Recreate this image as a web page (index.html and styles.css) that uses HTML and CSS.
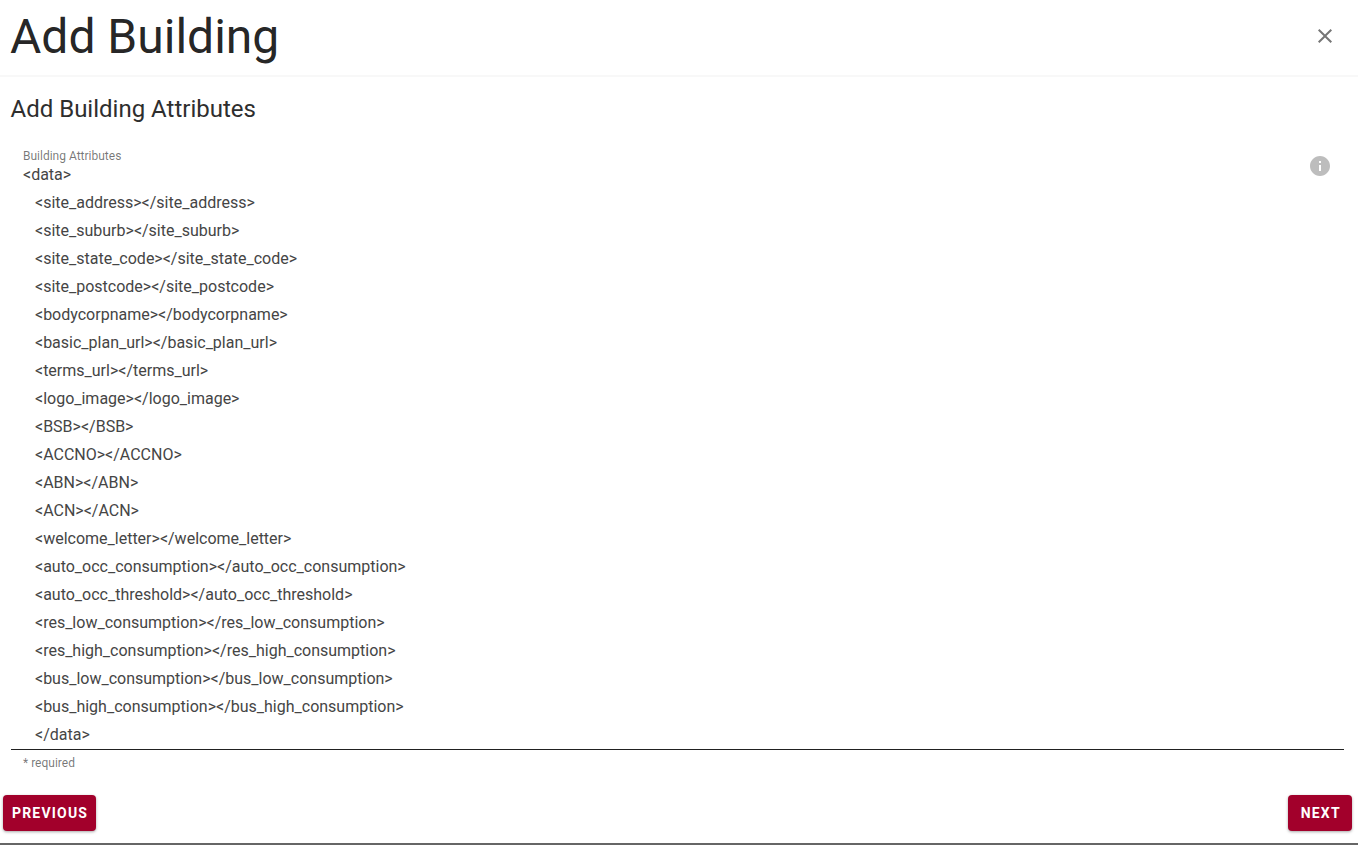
FILE: index.html
```html
<!DOCTYPE html>
<html lang="en">
<head>
<meta charset="utf-8">
<title>Add Building</title>
<link rel="stylesheet" href="styles.css">
</head>
<body>
<div class="dialog">
  <header class="dialog-header">
    <h1 class="dialog-title">Add Building</h1>
    <button class="close" aria-label="Close">
      <svg viewBox="0 0 24 24" width="24" height="24"><path d="M19 6.41 17.59 5 12 10.59 6.41 5 5 6.41 10.59 12 5 17.59 6.41 19 12 13.41 17.59 19 19 17.59 13.41 12z"/></svg>
    </button>
  </header>
  <main class="dialog-body">
    <h2 class="section-title">Add Building Attributes</h2>
    <div class="field">
      <div class="field-main">
        <label class="field-label">Building Attributes</label>
        <div class="xml">
          <div class="xml-root">&lt;data&gt;</div>
          <div class="xml-line">&lt;site_address&gt;&lt;/site_address&gt;</div>
          <div class="xml-line">&lt;site_suburb&gt;&lt;/site_suburb&gt;</div>
          <div class="xml-line">&lt;site_state_code&gt;&lt;/site_state_code&gt;</div>
          <div class="xml-line">&lt;site_postcode&gt;&lt;/site_postcode&gt;</div>
          <div class="xml-line">&lt;bodycorpname&gt;&lt;/bodycorpname&gt;</div>
          <div class="xml-line">&lt;basic_plan_url&gt;&lt;/basic_plan_url&gt;</div>
          <div class="xml-line">&lt;terms_url&gt;&lt;/terms_url&gt;</div>
          <div class="xml-line">&lt;logo_image&gt;&lt;/logo_image&gt;</div>
          <div class="xml-line">&lt;BSB&gt;&lt;/BSB&gt;</div>
          <div class="xml-line">&lt;ACCNO&gt;&lt;/ACCNO&gt;</div>
          <div class="xml-line">&lt;ABN&gt;&lt;/ABN&gt;</div>
          <div class="xml-line">&lt;ACN&gt;&lt;/ACN&gt;</div>
          <div class="xml-line">&lt;welcome_letter&gt;&lt;/welcome_letter&gt;</div>
          <div class="xml-line">&lt;auto_occ_consumption&gt;&lt;/auto_occ_consumption&gt;</div>
          <div class="xml-line">&lt;auto_occ_threshold&gt;&lt;/auto_occ_threshold&gt;</div>
          <div class="xml-line">&lt;res_low_consumption&gt;&lt;/res_low_consumption&gt;</div>
          <div class="xml-line">&lt;res_high_consumption&gt;&lt;/res_high_consumption&gt;</div>
          <div class="xml-line">&lt;bus_low_consumption&gt;&lt;/bus_low_consumption&gt;</div>
          <div class="xml-line">&lt;bus_high_consumption&gt;&lt;/bus_high_consumption&gt;</div>
          <div class="xml-line">&lt;/data&gt;</div>
        </div>
      </div>
      <svg class="info" viewBox="0 0 24 24" width="24" height="24"><path d="M12 2C6.48 2 2 6.48 2 12s4.48 10 10 10 10-4.48 10-10S17.52 2 12 2zm1 15h-2v-6h2v6zm0-8h-2V7h2v2z"/></svg>
    </div>
    <p class="helper">* required</p>
  </main>
  <footer class="dialog-actions">
    <button class="btn">Previous</button>
    <button class="btn">Next</button>
  </footer>
</div>
</body>
</html>
```
FILE: styles.css
```css
* { box-sizing: border-box; }
html, body { height: 100%; }
body {
  margin: 0;
  background: #fff;
  color: rgba(0, 0, 0, 0.87);
  font-family: Roboto, "Liberation Sans", sans-serif;
  overflow: hidden;
}
.dialog {
  height: 845px;
  display: flex;
  flex-direction: column;
  border-bottom: 2px solid #666;
}
.dialog-header {
  height: 77px;
  flex: none;
  display: flex;
  align-items: center;
  justify-content: space-between;
  padding: 0 21px 4px 10px;
  border-bottom: 2px solid #f8f8f8;
}
.dialog-title {
  margin: 4px 0 0;
  font-size: 48px;
  font-weight: 400;
  line-height: 1.167;
}
.close {
  width: 24px;
  height: 24px;
  padding: 0;
  border: 0;
  background: none;
  display: flex;
}
.close svg { fill: #757575; }
.dialog-body {
  flex: none;
  padding: 0 14px 0 11px;
}
.section-title {
  margin: 0 0 0 -0.5px;
  padding-top: 16px;
  font-size: 24px;
  font-weight: 400;
  line-height: 32px;
  color: #2e2e2e;
}
.field {
  margin-top: 16px;
  padding: 8px 12px 0 12px;
  display: flex;
  justify-content: space-between;
  align-items: flex-start;
  border-bottom: 1px solid #212121;
}
.field-main { flex: 1; }
.field-label {
  display: block;
  font-size: 12px;
  line-height: 14px;
  color: rgba(0, 0, 0, 0.54);
}
.xml {
  font-size: 16px;
  line-height: 28px;
  color: #454545;
}
.xml-root { height: 26px; line-height: 24px; }
.xml-line { height: 28px; padding-left: 12px; }
.info { fill: #bdbdbd; margin-top: 5px; flex: none; }
.helper {
  margin: 0;
  padding: 6px 12px 0;
  font-size: 12px;
  line-height: 14px;
  color: rgba(0, 0, 0, 0.54);
}
.dialog-actions {
  display: flex;
  justify-content: space-between;
  padding: 25px 6px 0 3px;
}
.btn {
  height: 36px;
  padding: 0 7.5px 0 9px;
  min-width: 64px;
  border: 0;
  border-radius: 4px;
  background: #a2002b;
  color: #fff;
  font-family: inherit;
  font-size: 14px;
  font-weight: 700;
  letter-spacing: 0.085em;
  text-transform: uppercase;
  box-shadow: 0 1px 3px rgba(0, 0, 0, 0.35);
}
```
